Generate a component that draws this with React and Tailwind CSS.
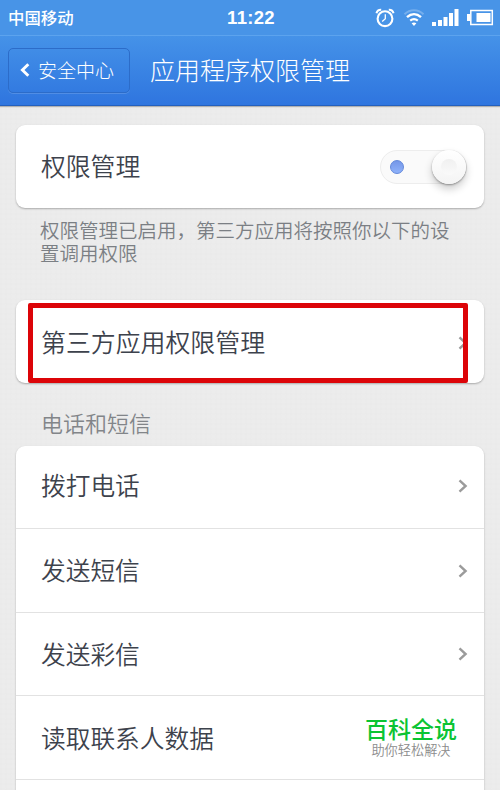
import { useState } from "react"

const FONT = "font-['Noto_Sans_CJK_SC',sans-serif]"

const CARD =
  "bg-white shadow-[0_1px_2px_rgba(0,0,0,0.28)]"

const PERMISSIONS = [
  { id: "call", label: "拨打电话", row: "h-[83px] pb-[5px]", arrow: true },
  { id: "sms", label: "发送短信", row: "h-[84px] pb-[2px]", arrow: true },
  { id: "mms", label: "发送彩信", row: "h-[83px] pb-[2px]", arrow: true },
  { id: "contacts", label: "读取联系人数据", row: "h-[84px]", arrow: false },
]

function Chevron() {
  return (
    <svg className="w-[10px] h-[14px] mt-[2px]" viewBox="0 0 10 14" fill="none">
      <path d="M1.5 1.3 7.6 7 1.5 12.7" stroke="#9b9b9b" strokeWidth="2.4" />
    </svg>
  )
}

/**
 * Status bar: carrier, clock, system icons
 */
function StatusBar() {
  return (
    <div className="flex items-center h-[35px] pl-2 pr-[6px] bg-[#4894e7] text-white">
      <span className="flex-1 text-[16.4px] font-medium leading-none">中国移动</span>
      <span className="font-['Liberation_Sans',sans-serif] text-[18.5px] font-bold leading-none tracking-[0.3px] pt-[2px]">
        11:22
      </span>
      <div className="flex-1 flex items-center justify-end">
        {/* Alarm */}
        <svg className="w-[20px] h-[20px]" viewBox="0 0 20 20" fill="none" stroke="#fff">
          <circle cx="10" cy="10.7" r="7.4" strokeWidth="2.1" />
          <path d="M10.3 6.2v4.6L7.2 13.6" strokeWidth="1.3" />
          <path d="M1.5 5.2C2 3 3.8 1.6 6.2 1.7M18.5 5.2C18 3 16.2 1.6 13.8 1.7" strokeWidth="2.1" />
        </svg>

        {/* Wifi */}
        <svg className="w-[22px] h-[18px] ml-[8px]" viewBox="0 0 22 18" fill="none" stroke="#fff">
          <path d="M1.5 5.2C7-.1 15-.1 20.5 5.2" strokeWidth="2" opacity="0.25" />
          <path d="M4 8.2C8.3 4.3 13.7 4.3 18 8.2" strokeWidth="2.4" />
          <path d="M7.2 11.6c2.5-2 5.1-2 7.6 0" strokeWidth="2.2" />
          <path d="M8.6 14.3 11 17l2.4-2.7c-1.6-1-3.2-1-4.8 0Z" fill="#fff" stroke="none" />
        </svg>

        {/* Signal */}
        <svg className="w-[27px] h-[18px] ml-[7px]" viewBox="0 0 27 18" fill="#fff">
          <path d="M0 13h4v4H0zM6 11h4v6H6zM11.5 8h4v9h-4zM17 4h4v13h-4zM22.5 0h4v17h-4z" />
        </svg>

        {/* Battery */}
        <svg className="w-[27px] h-[17px] ml-[8px]" viewBox="0 0 27 17" fill="#fff">
          <path d="M0 5h3v7H0zM9.5 4h14v9h-14z" />
          <rect x="3.8" y="1.5" width="21.5" height="14" fill="none" stroke="#fff" strokeWidth="1.5" />
        </svg>
      </div>
    </div>
  )
}

function TitleBar() {
  return (
    <header className="flex items-center h-[71px] pl-2 border-t border-t-[#5ca3ee] border-b border-b-[#2460bd] bg-linear-to-b from-[#4592e8] to-[#2f75df] text-white shadow-[0_1px_1px_rgba(0,0,0,0.25)]">
      <button className="flex items-center w-[122px] h-[45px] pl-[11px] pb-[2px] rounded-[5px] border border-[#2c6cc9] shadow-[0_1px_0_rgba(255,255,255,0.15)]">
        <svg className="w-[10px] h-[14px]" viewBox="0 0 10 14" fill="none">
          <path d="M8.3 1.2 2.4 7l5.9 5.8" stroke="#fff" strokeWidth="2.9" />
        </svg>
        <span className="ml-[8px] text-[19px] font-light leading-none">安全中心</span>
      </button>
      <h1 className="ml-[20px] pb-[2px] text-[25px] font-light leading-none">应用程序权限管理</h1>
    </header>
  )
}

function Toggle({ on, onChange }) {
  return (
    <button
      role="switch"
      aria-checked={on}
      onClick={onChange}
      className={`flex items-center w-[87px] h-[34px] rounded-full bg-[#fafafa] border border-[#ededed] ${
        on ? "justify-between pl-[9px]" : "justify-start"
      }`}
    >
      {on && (
        <span className="w-[14px] h-[14px] rounded-full border border-[#6288da] bg-linear-to-b from-[#7597e8] to-[#8fb2fa]" />
      )}
      <span className="flex items-center justify-center w-[34px] h-[34px] rounded-full bg-linear-to-b from-white to-[#f4f4f4] shadow-[0_1px_2px_rgba(0,0,0,0.35),0_5px_9px_rgba(0,0,0,0.2)]">
        <span className="w-[16px] h-[16px] rounded-full bg-linear-to-b from-[#f0f0f0] to-[#fafafa]" />
      </span>
    </button>
  )
}

function App() {
  const [enabled, setEnabled] = useState(true)

  return (
    <div className={`${FONT} h-[790px] overflow-hidden bg-[#ececec] bg-[repeating-linear-gradient(90deg,rgba(0,0,0,0.005)_0_2px,transparent_2px_5px),repeating-linear-gradient(0deg,rgba(0,0,0,0.005)_0_2px,transparent_2px_5px)] text-[#3d424c]`}>
      <StatusBar />
      <TitleBar />

      <main className="px-4 pt-[19px]">
        {/* Master switch */}
        <section className={`${CARD} flex items-center justify-between w-[468px] h-[83px] pl-[25px] pr-[17px] rounded-[9px]`}>
          <h2 className="pb-[2px] text-[24.8px] font-[350] leading-none">权限管理</h2>
          <Toggle on={enabled} onChange={() => setEnabled(!enabled)} />
        </section>
        <p className="mt-[10px] pl-[24px] w-[440px] h-[46px] text-[19.5px] leading-[23px] font-[350] text-[#7b7f84]">
          权限管理已启用，第三方应用将按照你以下的设
          <br />
          置调用权限
        </p>

        {/* Third-party apps */}
        <section className={`${CARD} relative flex items-center justify-between w-[468px] h-[83px] mt-[36px] pl-[25px] pr-[16px] rounded-[9px]`}>
          <h2 className="pb-px text-[24.9px] font-[350] leading-none">第三方应用权限管理</h2>
          <Chevron />
          <span className="absolute left-[12px] top-[3px] w-[440px] h-[80px] rounded-[2px] border-[5px] border-[#dc0408]" />
        </section>

        {/* Phone and messages */}
        <h3 className="mt-[28px] pl-[25px] h-[35px] text-[22px] leading-[22px] font-[350] text-[#828589]">电话和短信</h3>
        <ul className={`${CARD} w-[468px] h-[400px] rounded-t-[9px]`}>
          {PERMISSIONS.map((item) => (
            <li
              key={item.id}
              className={`${item.row} flex items-center justify-between pl-[25px] pr-[16px] border-b border-[#e2e2e2]`}
            >
              <span className="text-[24.7px] font-[350] leading-none">{item.label}</span>
              {item.arrow ? (
                <Chevron />
              ) : (
                <div className="flex flex-col items-center mr-[11px]">
                  <strong className="text-[23px] leading-[23px] font-medium text-[#0bc433]">百科全说</strong>
                  <small className="text-[13.2px] leading-[19px] font-[350] text-[#8c8c8c]">助你轻松解决</small>
                </div>
              )}
            </li>
          ))}
        </ul>
      </main>
    </div>
  )
}

export default App
